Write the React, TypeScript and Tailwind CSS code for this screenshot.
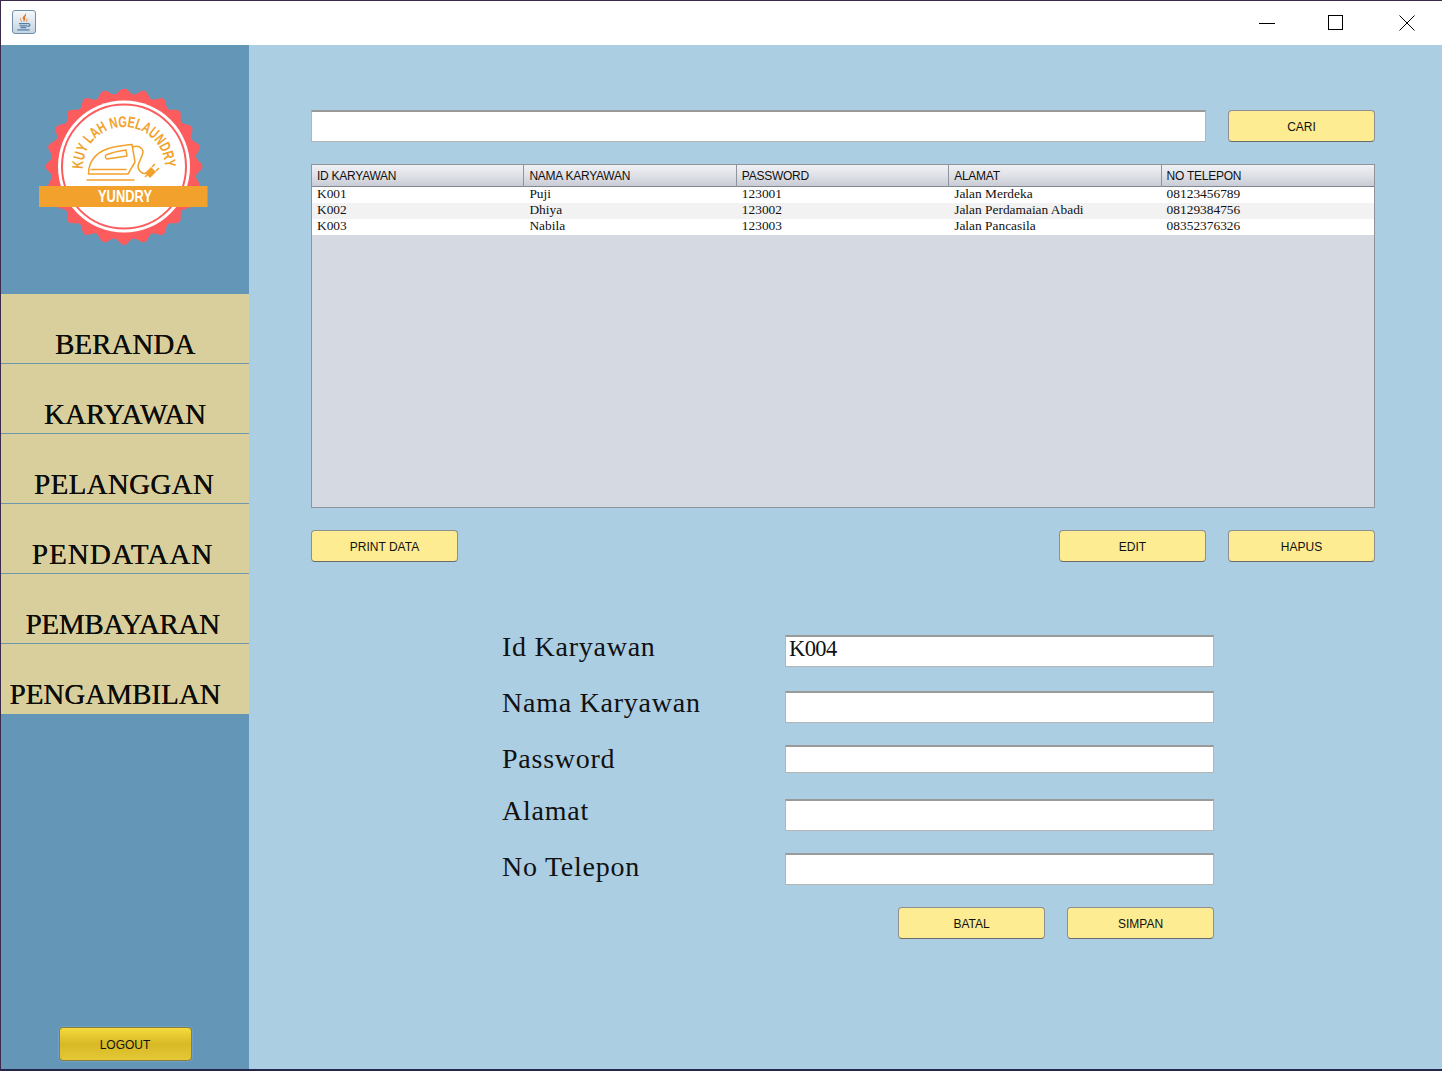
const navItems = [
  { label: "BERANDA", cls: "pl-0" },
  { label: "KARYAWAN", cls: "pl-0" },
  { label: "PELANGGAN", cls: "pr-[2px] tracking-[0.3px]" },
  { label: "PENDATAAN", cls: "pr-[5px] tracking-[1.1px]" },
  { label: "PEMBAYARAN", cls: "pr-[5px] tracking-[-0.3px]" },
  { label: "PENGAMBILAN", cls: "pr-[20px]" },
];

const columns = ["ID KARYAWAN", "NAMA KARYAWAN", "PASSWORD", "ALAMAT", "NO TELEPON"];

const rows = [
  ["K001", "Puji", "123001", "Jalan Merdeka", "08123456789"],
  ["K002", "Dhiya", "123002", "Jalan Perdamaian Abadi", "08129384756"],
  ["K003", "Nabila", "123003", "Jalan Pancasila", "08352376326"],
];

const fields = [
  { label: "Id Karyawan", value: "K004", height: "h-8", gap: "mb-6", labelTop: "mt-0" },
  { label: "Nama Karyawan", value: "", height: "h-8", gap: "mb-[22px]", labelTop: "mt-0" },
  { label: "Password", value: "", height: "h-[28px]", gap: "mb-[26px]", labelTop: "mt-[2px]" },
  { label: "Alamat", value: "", height: "h-8", gap: "mb-[22px]", labelTop: "mt-0" },
  { label: "No Telepon", value: "", height: "h-8", gap: "mb-[22px]", labelTop: "mt-[2px]" },
];

// scalloped edge of the badge
const scallopPath = () => {
  const cx = 78;
  const cy = 77.5;
  const lobes = 24;
  let d = "";
  for (let i = 0; i <= 240; i++) {
    const a = (i / 240) * Math.PI * 2 - Math.PI / 2;
    const r = 75.5 + 3 * Math.cos(a * lobes + Math.PI / 2 * lobes);
    d += `${i === 0 ? "M" : "L"}${(cx + r * Math.cos(a)).toFixed(2)} ${(cy + r * Math.sin(a)).toFixed(2)}`;
  }
  return d + "Z";
};

const Logo = () => (
  <svg width="170" height="157" viewBox="0 0 170 157" className="block">
    <g transform="translate(7 0)">
      <path d={scallopPath()} fill="#fd5c5e" />
      <circle cx="78" cy="77.500" r="66" fill="#fff" />
      <circle cx="78" cy="77.500" r="62" fill="#fff" stroke="#fd5c5e" strokeWidth="2" />
      <defs>
        <path id="badgeArc" d="M37 80 A41 41 0 1 1 119 78" />
      </defs>
      <text fontFamily="'Liberation Sans', sans-serif" fontSize="15.500" fontWeight="700" fill="#f2a22c">
        <textPath href="#badgeArc" startOffset="0" textLength="129" lengthAdjust="spacingAndGlyphs">KUY LAH NGELAUNDRY</textPath>
      </text>
      <g fill="none" stroke="#f2a22c" strokeWidth="1.500" strokeLinecap="round" strokeLinejoin="round">
        <path d="M41 91H88" />
        <path d="M42.500 85C42.500 71 52 61 68 58C74 57 79 56 86 55.500L89 73L82 85Z" />
        <path d="M45 80.500H80" />
        <path d="M60 66C67 63 73 62 80 61L81 67C74 68 67 69 61 70C59 69 59 67 60 66Z" />
        <path d="M87 58C91 56 96 58 97 62C97 67 93 72 92 77C92 82 97 86 101 84" />
      </g>
      <path d="M99 84L105 78L110 83L104 89Z" fill="#f2a22c" />
      <path d="M106 78L109 75M110 82L113 79M101 86L99 88" stroke="#f2a22c" strokeWidth="1.600" fill="none" />
    </g>
    <rect x="0" y="97" width="168.500" height="21" fill="#f2a22c" />
    <text x="86" y="113" textAnchor="middle" fontFamily="'Liberation Sans', sans-serif" fontSize="17" fontWeight="700" fill="#fff" textLength="54" lengthAdjust="spacingAndGlyphs">YUNDRY</text>
  </svg>
);

const JavaIcon = () => (
  <div className="flex h-6 w-6 items-center justify-center rounded-[3px] border border-[#6f8fab] bg-gradient-to-b from-[#f6f8fa] to-[#c5d4e2]">
    <svg width="18" height="20" viewBox="0 0 16 18">
      <path d="M9 1C10 3 6 4 7 6C7.500 7 8 8 7.500 9C10 7 9 6 9 5C9 4 11 3 9 1Z" fill="#e8742a" />
      <path d="M5 5.500C4 7 6 8 6 9M11 6C10 7.500 11 8 10 9" stroke="#e8a26a" strokeWidth="1" fill="none" />
      <path d="M3.500 10.500H11.500M4 12.500H11M5 14H10M2 16H13" stroke="#4f7ea6" strokeWidth="1.100" fill="none" />
      <path d="M11.500 10.500C14 10 14 13 11 13" stroke="#4f7ea6" strokeWidth="1" fill="none" />
    </svg>
  </div>
);

const YellowButton = ({ label, className = "" }: { label: string; className?: string }) => (
  <button className={`flex h-8 w-[147px] items-center justify-center rounded-[4px] border border-[#8f8f8f] border-b-[#6b6b6b] bg-[#fdec92] pt-[2px] text-[12px] text-[#111] ${className}`}>
    {label}
  </button>
);

const App = () => {
  return (
    <div className="flex h-[1071px] w-[1442px] flex-col overflow-hidden border-t border-l border-b-2 border-t-[#3c2a4a] border-l-[#3c2a4a] border-b-[#26264a] bg-white font-['Liberation_Sans',sans-serif]">
      {/* title bar */}
      <div className="flex h-[44px] shrink-0 items-center justify-between bg-white">
        <div className="ml-[11px] mb-[2px]">
          <JavaIcon />
        </div>
        <div className="mb-[1px] mr-[27px] flex items-center">
          <svg width="16" height="16" viewBox="0 0 16 16">
            <path d="M0 8.500H16" stroke="#000" strokeWidth="1" />
          </svg>
          <svg width="16" height="16" viewBox="0 0 16 16" className="ml-[53px]">
            <rect x="0.500" y="0.500" width="14" height="14" fill="none" stroke="#000" strokeWidth="1" />
          </svg>
          <svg width="16" height="16" viewBox="0 0 16 16" className="ml-[55px]">
            <path d="M0.500 0.500L15.500 15.500M15.500 0.500L0.500 15.500" stroke="#000" strokeWidth="1" />
          </svg>
        </div>
      </div>

      <div className="flex min-h-0 flex-1">
        {/* sidebar */}
        <div className="flex w-[248px] shrink-0 flex-col bg-[#6497b7]">
          <div className="flex h-[249px] shrink-0 justify-center pt-[44px] pr-[3px]">
            <Logo />
          </div>
          <div className="flex flex-col bg-[#d9cf9c]">
            {navItems.map((item, i) => (
              <div
                key={item.label}
                className={`flex h-[70px] items-end justify-center font-['Liberation_Serif',serif] text-[29px] leading-[36px] text-[#0c0c08] [text-shadow:0.3px_0_0_#0c0c08] ${item.cls} ${i < navItems.length - 1 ? "border-b border-[#6f98ad] pb-[1px]" : "pb-[2px]"}`}
              >
                {item.label}
              </div>
            ))}
          </div>
          <div className="mt-auto mb-[8px] flex justify-center">
            <button className="flex h-[34px] w-[133px] items-center justify-center rounded-[4px] border border-[#8a7f3a] bg-gradient-to-b from-[#f5da3c] via-[#d8b926] to-[#e4c835] pt-[1px] text-[12px] text-[#111] shadow-[0_0_0_1px_#6f9fca]">
              LOGOUT
            </button>
          </div>
        </div>

        {/* main panel */}
        <div className="flex min-w-0 flex-1 flex-col bg-[#accee2] pl-[62px] pr-[67px] pt-[65px]">
          <div className="flex h-8 gap-[22px]">
            <div className="h-8 flex-1 border border-[#b5b5b5] border-t-2 border-t-[#9a9a9a] bg-white" />
            <YellowButton label="CARI" />
          </div>

          <div className="mt-[22px] flex h-[344px] flex-col border border-[#8f949c] bg-[#d5d9e2]">
            <div className="grid h-[22px] shrink-0 grid-cols-5 border-b border-[#7f8792] bg-gradient-to-b from-[#f0f1f4] via-[#dfe1e7] to-[#c9ccd5]">
              {columns.map((col) => (
                <div key={col} className="border-r border-[#8f949c] pl-[5px] text-[12px] leading-[22px] tracking-[-0.25px] text-[#111] last:border-r-0">
                  {col}
                </div>
              ))}
            </div>
            {rows.map((row, i) => (
              <div key={row[0]} className={`grid h-4 shrink-0 grid-cols-5 ${i % 2 === 1 ? "bg-[#f2f2f2]" : "bg-white"}`}>
                {row.map((cell) => (
                  <div key={cell} className="pl-[5px] font-['Liberation_Serif',serif] text-[13.4px] leading-[13px] text-[#111]">
                    {cell}
                  </div>
                ))}
              </div>
            ))}
          </div>

          <div className="mt-[22px] flex gap-[22px]">
            <YellowButton label="PRINT DATA" className="mr-auto" />
            <YellowButton label="EDIT" />
            <YellowButton label="HAPUS" />
          </div>

          {/* form */}
          <div className="ml-[191px] mt-[73px] w-[712px]">
            {fields.map((f) => (
              <div key={f.label} className={`flex items-start ${f.gap}`}>
                <div className={`w-[283px] shrink-0 font-['Liberation_Serif',serif] text-[28px] leading-[24px] tracking-[0.75px] text-[#111] ${f.labelTop}`}>
                  {f.label}
                </div>
                <div className={`flex w-[429px] items-start border border-[#b5b5b5] border-t-2 border-t-[#9a9a9a] bg-white pl-[3px] font-['Liberation_Serif',serif] text-[22.500px] leading-[24px] tracking-[-0.6px] text-[#111] ${f.height}`}>
                  {f.value}
                </div>
              </div>
            ))}
            <div className="flex justify-end gap-[22px]">
              <YellowButton label="BATAL" />
              <YellowButton label="SIMPAN" />
            </div>
          </div>
        </div>
      </div>
    </div>
  );
};

export default App;
